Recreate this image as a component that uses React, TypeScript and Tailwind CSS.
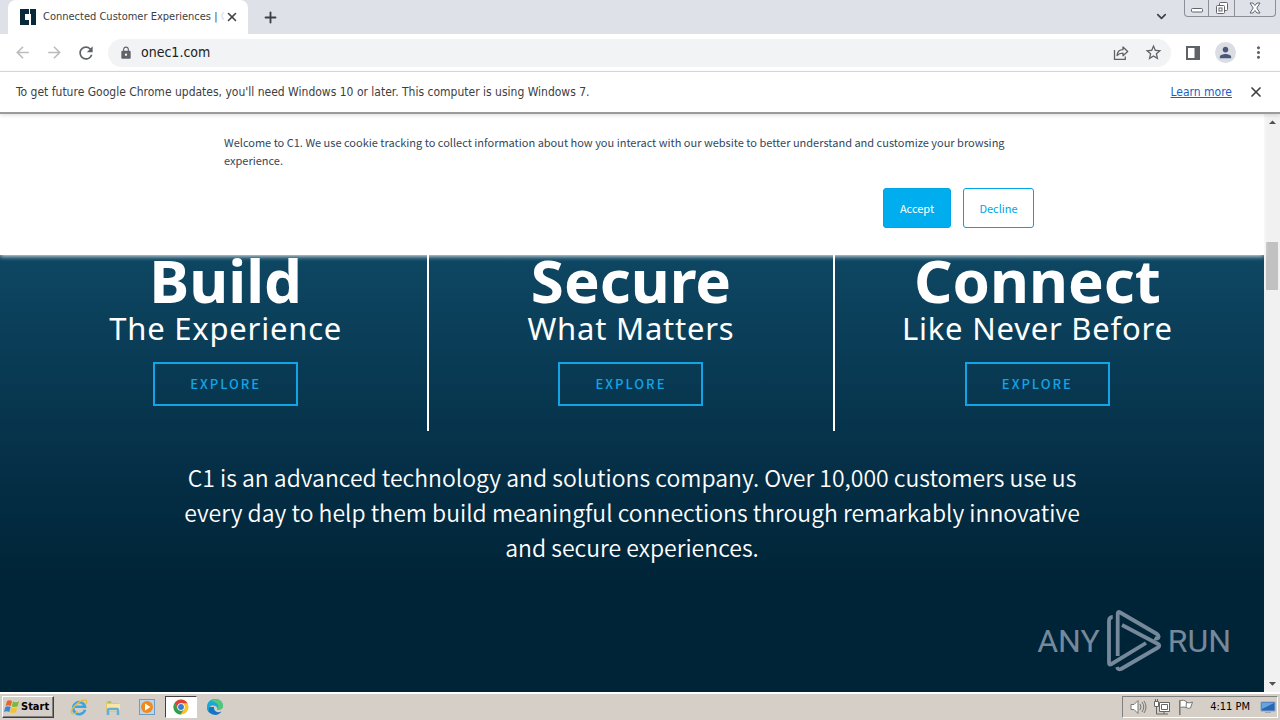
import type { ReactNode, SVGProps } from "react";
import { X, Plus, ChevronDown } from "lucide-react";
import { MdArrowBack, MdArrowForward, MdRefresh, MdLock, MdStarBorder, MdPerson, MdMoreVert, MdArrowDropUp, MdArrowDropDown } from "react-icons/md";

const ui = "font-['DejaVu_Sans_Condensed','DejaVu_Sans',sans-serif]";
const source = "font-['Noto_Sans_CJK_SC','Noto_Sans',sans-serif]";

function Svg({ children, ...rest }: SVGProps<SVGSVGElement>) {
  return <svg aria-hidden="true" fill="none" {...rest}>{children}</svg>;
}

function IconButton({ label, className = "", children }: { label: string; className?: string; children: ReactNode }) {
  return (
    <button type="button" aria-label={label} className={`flex shrink-0 items-center justify-center ${className}`}>
      {children}
    </button>
  );
}

function TabStrip() {
  return (
    <header className="flex h-[34px] shrink-0 bg-[#dee1e8] pl-2">
      <div className="flex w-60 items-center rounded-t-lg bg-white pr-2 pl-3">
        <Svg viewBox="0 0 16 16" className="size-4 shrink-0">
          <path fill="#08293a" d="M0 0h9v5H5v6h4v5H0zM10 0h6v16h-5V5h-1z" />
        </Svg>
        <span className="ml-[7px] h-4 w-[181px] overflow-hidden text-[11px] leading-4 whitespace-nowrap text-[#3c4043]">
          Connected Customer Experiences | <span className="text-[#dadce0]">C</span>
        </span>
        <IconButton label="Close tab" className="size-4"><X size={14} strokeWidth={2.6} color="#3c4043" /></IconButton>
      </div>
      <IconButton label="New tab" className="w-11"><Plus size={17} strokeWidth={2.6} color="#3c4043" /></IconButton>
      <div className="ml-auto flex items-start">
        <IconButton label="Search tabs" className="mt-[6px] mr-[13px] size-5"><ChevronDown size={15} strokeWidth={2.6} color="#3c4043" /></IconButton>
        <div className="mr-1 flex h-[17px] divide-x divide-[#8b8e96] rounded-b border border-t-0 border-[#8b8e96]">
          <IconButton label="Minimize" className="w-6">
            <Svg viewBox="0 0 12 12" className="size-3"><rect x=".5" y="6.5" width="11" height="3.5" rx="1" fill="#fff" stroke="#62656d" /></Svg>
          </IconButton>
          <IconButton label="Restore" className="w-[26px]">
            <Svg viewBox="0 0 14 14" className="size-[14px]" stroke="#62656d"><rect x="4.500" y="1.500" width="8" height="8" rx="1" fill="#fff" /><rect x="1.500" y="4.500" width="8" height="8" rx="1" fill="#fff" /><rect x="4" y="7" width="3" height="3" /></Svg>
          </IconButton>
          <IconButton label="Close" className="w-10">
            <Svg viewBox="0 0 12 12" className="size-3"><path d="M1 1h3l2 2.500L8 1h3L7.800 6l3.200 5H8L6 8.500 4 11H1l3.200-5z" fill="#fff" stroke="#62656d" /></Svg>
          </IconButton>
        </div>
      </div>
    </header>
  );
}

function Toolbar() {
  return (
    <div className="flex h-[38px] shrink-0 items-center border-b border-[#dcdde0] bg-white px-3 text-[#5f6368]">
      <IconButton label="Back" className="mr-3 size-5 text-[#babcbe]"><MdArrowBack size={19} /></IconButton>
      <IconButton label="Forward" className="mr-3 size-5 text-[#babcbe]"><MdArrowForward size={19} /></IconButton>
      <IconButton label="Reload" className="mr-3 size-5"><MdRefresh size={20} /></IconButton>
      <div className="flex h-7 min-w-0 flex-1 items-center rounded-full bg-[#f1f3f4] pr-2 pl-[11px]">
        <MdLock size={14} className="shrink-0" aria-hidden="true" />
        <input aria-label="Address" defaultValue="onec1.com" className="ml-2 min-w-0 flex-1 bg-transparent text-[14px] text-[#202124] outline-none" />
        <IconButton label="Share" className="mr-3 size-5">
          <Svg viewBox="0 0 16 16" className="size-4" stroke="#5f6368" strokeWidth="1.300"><path d="M1.500 5v9.300h10.800V11.500" /><path d="M4 10.500c.5-4 2.700-5.800 6-5.800V2l4.700 4.500L10 10.800V8.200c-2.700 0-4.500.6-6 2.300z" strokeLinejoin="round" /></Svg>
        </IconButton>
        <IconButton label="Bookmark this page" className="size-5"><MdStarBorder size={19} /></IconButton>
      </div>
      <IconButton label="Side panel" className="ml-3 size-5">
        <Svg viewBox="0 0 14 14" className="size-[14px]"><path d="M1 1h12v12H1z" stroke="#5f6368" strokeWidth="2" /><path d="M8.500 1H13v12H8.500z" fill="#5f6368" /></Svg>
      </IconButton>
      <IconButton label="Profile" className="ml-3 size-[21px] rounded-full bg-[#dadde4] text-[#4a5878]"><MdPerson size={17} /></IconButton>
      <IconButton label="Menu" className="ml-3 size-5"><MdMoreVert size={19} /></IconButton>
    </div>
  );
}

function UpdateNotice() {
  return (
    <div className="relative z-10 flex h-[42px] shrink-0 items-center border-b-2 border-[#9b9b9b] bg-white px-4 text-[12px] text-[#3c4043] shadow-[0_1px_4px_#00000026]">
      <p>To get future Google Chrome updates, you'll need Windows 10 or later. This computer is using Windows 7.</p>
      <a href="#learn" className="ml-auto text-[#1a5fc4] underline">Learn more</a>
      <IconButton label="Dismiss" className="ml-4 size-4"><X size={16} strokeWidth={2.500} /></IconButton>
    </div>
  );
}

function CookieBanner() {
  return (
    <section aria-label="Cookie notice" className={`relative flex h-[141px] shrink-0 justify-center bg-white pt-[19px] text-[#33475b] shadow-[0_1px_5px_#ffffff] ${source}`}>
      <div className="w-[816px]">
        <p className="text-[11px] leading-[18px]">
          Welcome to C1. We use cookie tracking to collect information about how you interact with our website to better understand and customize your browsing experience.
        </p>
        <div className="mt-[19px] flex justify-end gap-3 pr-[6px] text-[11px]">
          <button type="button" className="h-10 w-[68px] rounded-[3px] border border-[#00a4e4] bg-[#00aeef] text-white">Accept</button>
          <button type="button" className="h-10 w-[71px] rounded-[3px] border border-[#00a4e4] text-[#00a4e4]">Decline</button>
        </div>
      </div>
    </section>
  );
}

const pillars = [
  { title: "Build", subtitle: "The Experience" },
  { title: "Secure", subtitle: "What Matters" },
  { title: "Connect", subtitle: "Like Never Before" },
];

function Watermark() {
  return (
    <div className="absolute right-[33px] bottom-5 flex items-center gap-[6px] font-[Roboto,'Liberation_Sans',sans-serif] text-[32px] leading-none text-[#76899a]">
      <span>ANY</span>
      <Svg viewBox="0 0 56 62" className="h-[62px] w-14" stroke="#76899a" strokeWidth="3.800" strokeLinejoin="round">
        <path d="M6.700 7Q3 7 3 11v42q0 2.500 2.500 1L40 33" />
        <path d="M11.700 46V4q0-3 2.500-1.500L51 24q2.500 2 1 4-1.500 1-3.500 0" />
        <path d="M16 15l36 19q2.500 1.500 0 3.500L15 59q-3 1.200-4-2" />
      </Svg>
      <span>RUN</span>
    </div>
  );
}

function Hero() {
  return (
    <section className="flex-1 bg-linear-to-b from-[#0e4763] via-[#063149] via-45% to-[#002437] to-75% text-white">
      <div className="grid grid-cols-3 px-6">
        {pillars.map(({ title, subtitle }) => (
          <div key={title} className="flex h-[176px] flex-col items-center border-r-2 border-white last:border-r-0">
            <h2 className="text-[60px] leading-[50px] font-bold">{title}</h2>
            <p className="mt-[7px] text-[31px] leading-8 tracking-wide">{subtitle}</p>
            <a href="#explore" className={`mt-[18px] flex h-11 w-[145px] items-center justify-center border-2 border-[#14a3e4] text-[13px] font-medium tracking-[2px] text-[#14a3e4] ${source}`}>EXPLORE</a>
          </div>
        ))}
      </div>
      <p className={`mx-auto mt-[29px] max-w-[910px] text-center text-[23px] leading-[35px] font-[350] ${source}`}>
        C1 is an advanced technology and solutions company. Over 10,000 customers use us every day to help them build meaningful connections through remarkably innovative and secure experiences.
      </p>
    </section>
  );
}

function Scrollbar() {
  return (
    <div aria-hidden="true" className="flex w-4 shrink-0 flex-col items-center bg-[#f1f1f1] text-[#505050]">
      <MdArrowDropUp size={17} />
      <div className="mt-[111px] h-12 w-3 bg-[#c1c1c1]" />
      <MdArrowDropDown size={17} className="mt-auto" />
    </div>
  );
}

function Taskbar() {
  return (
    <footer className="flex h-7 shrink-0 items-center border-t-2 border-white bg-[#d5cfc7] pr-[2px] text-black">
      <button type="button" className="ml-[2px] flex h-[22px] w-[52px] items-center border border-t-white border-r-[#404040] border-b-[#404040] border-l-white pl-px text-[11px] font-bold shadow-[inset_-1px_-1px_#808080]">
        <Svg viewBox="0 0 16 16" className="mr-px size-4 shrink-0">
          <path fill="#e9632a" d="M3 2c2-1 3-.7 5 0L6.800 7C5 6 3.500 6 1.700 7z" /><path fill="#7db83a" d="M9 2.500c2 .8 3.500 1 6-.2l-1.300 5c-2 .9-4 .8-6 .2z" /><path fill="#3a87ce" d="M1.300 8c2-.9 3.500-.8 5.300 0l-1.300 5C3.500 12 2 12 0 13z" /><path fill="#f3c32e" d="M7.300 8.500c2 .8 4 1 6-.2L12 13c-2 1-4 1-6 .5z" />
        </Svg>
        Start
      </button>
      <nav aria-label="Quick launch" className="ml-2 flex items-center">
        <IconButton label="Internet Explorer" className="w-[34px]">
          <Svg viewBox="0 0 18 18" className="size-[18px]"><path d="M15 11.700A6 6 0 1 1 15 8.700H5" stroke="#3ba5df" strokeWidth="2.600" /><path d="M2 15.500C-1 12 9 2 15 2c2 0 2 2 1 4M2 15.500c1.500 1 4-.5 6-2" stroke="#e6bd3e" strokeWidth="1.400" /></Svg>
        </IconButton>
        <IconButton label="File Explorer" className="w-[34px]">
          <Svg viewBox="0 0 18 18" className="size-[18px]"><path fill="#e6c66a" d="M2 3h5l1 2h7v9H2z" /><path fill="#f7e6a4" d="M3 6h13v7H3z" /><path stroke="#66add7" strokeWidth="2.500" d="M4 17v-5q0-1 1-1h8q1 0 1 1v5" /><path stroke="#79b45b" d="M4 4h3" /></Svg>
        </IconButton>
        <IconButton label="Media Player" className="w-[34px]">
          <Svg viewBox="0 0 18 18" className="size-[18px]"><rect x="1.500" y="1.500" width="15" height="15" fill="#b9d6ed" stroke="#6e9cc5" /><circle cx="9" cy="9" r="6" fill="#f18a1b" /><path fill="#fff" d="M7 5.500 12.500 9 7 12.500z" /></Svg>
        </IconButton>
        <IconButton label="Chrome" className="ml-px h-[22px] w-8 border border-t-[#404040] border-r-white border-b-white border-l-[#404040] bg-white">
          <Svg viewBox="0 0 18 18" className="size-4"><circle cx="9" cy="9" r="8.500" fill="#f6c528" /><path fill="#dd4435" d="M1.600 4.800A8.500 8.500 0 0 1 16.400 4.800H9L5.400 11z" /><path fill="#2f9e50" d="M1.600 4.800 5.400 11.100 9 13.200 12.600 11.100 8.600 17.500A8.500 8.500 0 0 1 1.600 4.800z" /><circle cx="9" cy="9" r="4.200" fill="#fff" /><circle cx="9" cy="9" r="3.300" fill="#4178d4" /></Svg>
        </IconButton>
        <IconButton label="Edge" className="ml-px w-[34px]">
          <Svg viewBox="0 0 18 18" className="size-[18px]"><path fill="#1575c4" d="M1 9a8 8 0 0 0 14.500 4.500C10 16 7.500 12 8 9z" /><path fill="#1aa9d5" d="M1 9C1 4 4.500 1 9 1c5 0 8 3 8 7 0 3-3 4.500-6 3.500 1-1 0-4-4-4C4 7.500 2 10 3 14 1.500 12.500 1 11 1 9z" /><path fill="#53c879" d="M9 1c5 0 8 3 8 7 0 3-3 4.500-6 3.500C14 9 12 4 5 3q2-2 4-2z" /></Svg>
        </IconButton>
      </nav>
      <div className="ml-auto flex h-[22px] items-center border border-t-[#808080] border-r-white border-b-white border-l-[#808080] pr-px pl-[3px] text-[11px]">
        <IconButton label="Volume" className="w-6"><Svg viewBox="0 0 18 18" className="size-[18px]" stroke="#777"><path fill="#fff" d="M2 6.500h3l4-4v13l-4-4H2z" /><path d="M11 6q2 3 0 6M13 4q3.500 5 0 10M15 3q4 6 0 12" /></Svg></IconButton>
        <IconButton label="Network" className="w-6"><Svg viewBox="0 0 18 18" className="size-[18px]" stroke="#666"><path fill="#fff" d="M6.500 4.500h10v9h-10z" /><path d="M8.500 6.500h6v5h-6zM8 16h7M11 14v2M3.500 9v7H8" /><path fill="#fff" d="M1.500 3.500h4v5h-4zM2.500 1v2.500M4.500 1v2.500" /></Svg></IconButton>
        <IconButton label="Action Center" className="w-6"><Svg viewBox="0 0 18 18" className="size-[18px]" stroke="#777"><path fill="#fff" d="M3.500 2.500q3-1 6 1l-.5 6q-3-1-5.500 0M9.500 4.500q3 1 6-.5l-2 6q-2 1-4.500-.5" /><path strokeWidth="1.500" d="M2.800 2v15" /></Svg></IconButton>
        <time className="mr-[10px] ml-3 whitespace-nowrap">4:11 PM</time>
        <IconButton label="Show desktop" className="w-4"><Svg viewBox="0 0 16 16" className="size-4"><path fill="#2866b6" stroke="#87a4c8" d="M1 3h14v9H1z" /><path fill="#65a5de" d="M2 4h12L2 10z" /><path fill="#a0a8b2" d="M5 13h6v1H5z" /></Svg></IconButton>
      </div>
    </footer>
  );
}

export default function App() {
  return (
    <div className={`flex min-h-screen flex-col bg-white ${ui}`}>
      <TabStrip />
      <Toolbar />
      <UpdateNotice />
      <div className="flex flex-1">
        <main className="relative flex min-w-0 flex-1 flex-col font-['Noto_Sans',sans-serif]">
          <CookieBanner />
          <Hero />
          <Watermark />
        </main>
        <Scrollbar />
      </div>
      <Taskbar />
    </div>
  );
}
